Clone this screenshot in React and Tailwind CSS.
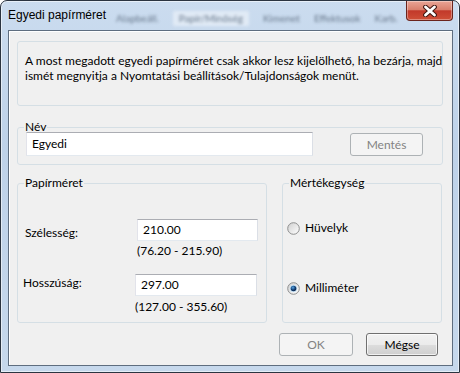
import React from 'react';

function CloseGlyph() {
  return (
    <svg width="16" height="12" viewBox="0 0 16 12">
      <path d="M3.5 2 L12.5 10 M12.5 2 L3.5 10" stroke="#3f1510" strokeWidth="4.8" strokeLinecap="round" />
      <path d="M3.5 2 L12.5 10 M12.5 2 L3.5 10" stroke="#ffffff" strokeWidth="2.8" strokeLinecap="round" />
    </svg>
  );
}

function Radio({ checked }) {
  return (
    <svg width="13" height="13" viewBox="0 0 13 13">
      <defs>
        <linearGradient id="rfill" x1="0" y1="0" x2="1" y2="1">
          <stop offset="0" stopColor="#cfcfcf" />
          <stop offset="1" stopColor="#ffffff" />
        </linearGradient>
        <radialGradient id="rdot" cx="0.4" cy="0.35" r="0.7">
          <stop offset="0" stopColor="#5aa9e6" />
          <stop offset="0.6" stopColor="#123c72" />
          <stop offset="1" stopColor="#0b1d3a" />
        </radialGradient>
      </defs>
      <circle cx="6.5" cy="6.5" r="5.8" fill="url(#rfill)" stroke="#8e8f8f" strokeWidth="1" />
      {checked && <circle cx="6.5" cy="6.5" r="3.6" fill="#bfe0f7" />}
      {checked && <circle cx="6.5" cy="6.5" r="2.8" fill="url(#rdot)" />}
    </svg>
  );
}

const inputCls =
  'bg-white border border-[#abadb3] border-l-[#e2e3ea] border-r-[#dbdfe6] border-b-[#e3e9ef] px-[5px] text-[12px] leading-[14px] flex items-center';

export default function App() {
  return (
    <div className="w-[460px] h-[373px] flex flex-col overflow-hidden rounded-t-[7px] border border-[#2b3440] bg-[linear-gradient(to_bottom,#cbdcef_0%,#bed2e9_40%,#c6d8ec_100%)] shadow-[inset_0_0_0_1px_rgba(255,255,255,0.55)] font-['Lato','Liberation_Sans',sans-serif] text-black">
      {/* title bar */}
      <div className="h-[29px] flex items-start shrink-0">
        <span className="ml-[7px] mt-[7px] text-[12px] leading-[14px] text-black font-['Liberation_Sans',Arial,sans-serif]">Egyedi papírméret</span>
        <div className="flex-1 flex items-start gap-[14px] mt-[10px] ml-[10px] text-[10px] text-[#4f5f72] blur-[1.4px] opacity-80">
          <span>Alapbeáll.</span>
          <span className="bg-[#e6eef7] px-[6px]">Papír/Minőség</span>
          <span>Kimenet</span>
          <span>Effektusok</span>
          <span>Karb.</span>
        </div>
        <div className="w-[47px] h-[20px] mr-[6px] flex items-center justify-center rounded-b-[4px] border border-t-0 border-[#6a241c] bg-[linear-gradient(to_bottom,#e9a596_0%,#d9806d_45%,#c2392a_52%,#cf4f37_100%)] shadow-[inset_0_0_0_1px_rgba(255,255,255,0.35)]">
          <CloseGlyph />
        </div>
      </div>

      {/* client area */}
      <div className="flex-1 ml-[7px] mr-[6px] mb-[6px] border border-[#5e6d7f] bg-[#f0f0f0] shadow-[inset_1px_1px_0_#ffffff] flex flex-col text-[12px] leading-[14px]">
        <div className="ml-[8px] mt-[10px] w-[426px] h-[65px] border border-[#d5dfe5] rounded-[3px] px-[7px] pt-[11px] leading-[15px] whitespace-nowrap">
          <p>A most megadott egyedi papírméret csak akkor lesz kijelölhető, ha bezárja, majd</p>
          <p>ismét megnyitja a Nyomtatási beállítások/Tulajdonságok menüt.</p>
        </div>

        <fieldset className="ml-[8px] mt-[14px] w-[426px] h-[45px] border border-[#d5dfe5] rounded-[3px]">
          <legend className="ml-[6px] px-[1px]">Név</legend>
          <div className="flex items-start mt-[-2px]">
            <div className={inputCls + ' ml-[8px] w-[287px] h-[24px]'}>Egyedi</div>
            <div className="ml-[37px] mt-[1px] w-[73px] h-[23px] border border-[#adb2b5] rounded-[3px] bg-[#f4f4f4] text-[#838383] flex items-center justify-center">
              Mentés
            </div>
          </div>
        </fieldset>

        <div className="flex ml-[8px] mt-[11px] gap-[15px]">
          <fieldset className="w-[250px] h-[147px] border border-[#d5dfe5] rounded-[3px]">
            <legend className="ml-[6px] px-[1px]">Papírméret</legend>
            <div className="flex pl-[7px] mt-[29px]">
              <span className="w-[112px] pt-[7px]">Szélesség:</span>
              <div className="flex flex-col">
                <div className={inputCls + ' w-[121px] h-[22px]'}>210.00</div>
                <span className="mt-[3px]">(76.20 - 215.90)</span>
              </div>
            </div>
            <div className="flex pl-[5px] mt-[16px]">
              <span className="w-[112px] pt-[2px]">Hosszúság:</span>
              <div className="flex flex-col">
                <div className={inputCls + ' w-[122px] h-[22px]'}>297.00</div>
                <span className="mt-[4px]">(127.00 - 355.60)</span>
              </div>
            </div>
          </fieldset>

          <fieldset className="w-[160px] h-[147px] border border-[#d5dfe5] rounded-[3px]">
            <legend className="ml-[6px] px-[1px]">Mértékegység</legend>
            <div className="flex items-center gap-[5px] pl-[4px] mt-[31px]">
              <Radio />
              <span>Hüvelyk</span>
            </div>
            <div className="flex items-center gap-[5px] pl-[4px] mt-[46px]">
              <Radio checked />
              <span>Milliméter</span>
            </div>
          </fieldset>
        </div>

        <div className="flex justify-end gap-[13px] mr-[14px] mt-[10px]">
          <div className="w-[74px] h-[23px] border border-[#adb2b5] rounded-[3px] bg-[#f4f4f4] text-[#838383] flex items-center justify-center">
            OK
          </div>
          <div className="w-[72px] h-[23px] border border-[#707070] rounded-[3px] bg-[linear-gradient(to_bottom,#f2f2f2_0%,#ebebeb_50%,#dddddd_51%,#cfcfcf_100%)] shadow-[inset_0_0_0_1px_rgba(255,255,255,0.7)] flex items-center justify-center">
            Mégse
          </div>
        </div>
      </div>
    </div>
  );
}
